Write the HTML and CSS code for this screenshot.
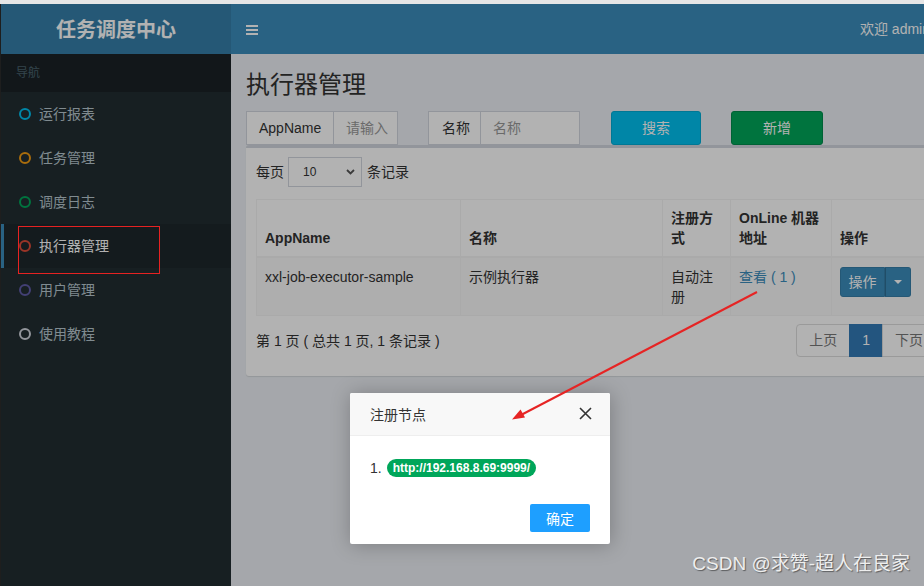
FILE: index.html
```html
<!DOCTYPE html>
<html lang="zh-CN">
<head>
<meta charset="utf-8">
<title>执行器管理</title>
<link rel="stylesheet" href="styles.css">
</head>
<body>
<div class="frame">
  <header class="main-header">
    <div class="logo">任务调度中心</div>
    <nav class="navbar">
      <span class="hamburger"><i></i><i></i><i></i></span>
      <span class="welcome">欢迎 admin</span>
    </nav>
  </header>
  <div class="layout">
    <aside class="sidebar">
      <div class="nav-header">导航</div>
      <ul class="menu">
        <li><a><span class="dot aqua"></span>运行报表</a></li>
        <li><a><span class="dot yellow"></span>任务管理</a></li>
        <li><a><span class="dot green"></span>调度日志</a></li>
        <li class="active"><a><span class="dot red"></span>执行器管理</a></li>
        <li><a><span class="dot purple"></span>用户管理</a></li>
        <li><a><span class="dot gray"></span>使用教程</a></li>
      </ul>
    </aside>
    <main class="content">
      <h1 class="page-title">执行器管理</h1>
      <div class="filters">
        <div class="group g1">
          <span class="addon">AppName</span>
          <span class="input">请输入</span>
        </div>
        <div class="group g2">
          <span class="addon">名称</span>
          <span class="input">名称</span>
        </div>
        <span class="btn btn-info">搜索</span>
        <span class="btn btn-success">新增</span>
      </div>
      <section class="box">
        <div class="length">
          <span>每页</span>
          <span class="select">10
            <svg class="chev" width="9" height="6" viewBox="0 0 9 6"><path d="M1 1l3.5 3.5L8 1" fill="none" stroke="#555" stroke-width="1.8"/></svg>
          </span>
          <span>条记录</span>
        </div>
        <table class="grid">
          <colgroup>
            <col class="c1"><col class="c2"><col class="c3"><col class="c4"><col class="c5">
          </colgroup>
          <thead>
            <tr><th>AppName</th><th>名称</th><th>注册方式</th><th>OnLine 机器地址</th><th>操作</th></tr>
          </thead>
          <tbody>
            <tr>
              <td>xxl-job-executor-sample</td>
              <td>示例执行器</td>
              <td>自动注册</td>
              <td><a class="link">查看 ( 1 )</a></td>
              <td><span class="btn-group"><span class="bg-main">操作</span><span class="bg-caret"><i></i></span></span></td>
            </tr>
          </tbody>
        </table>
        <div class="table-foot">
          <span class="info">第 1 页 ( 总共 1 页, 1 条记录 )</span>
          <ul class="pagination">
            <li><a>上页</a></li>
            <li class="active"><a>1</a></li>
            <li><a>下页</a></li>
          </ul>
        </div>
      </section>
    </main>
  </div>
</div>
<div class="backdrop"></div>
<div class="modal">
  <div class="modal-head">注册节点
    <svg class="close" width="13" height="13" viewBox="0 0 13 13"><path d="M1 1L12 12M12 1L1 12" stroke="#333" stroke-width="1.6" fill="none"/></svg>
  </div>
  <div class="modal-body">
    <div class="node"><span class="num">1.</span><span class="badge">http://192.168.8.69:9999/</span></div>
  </div>
  <div class="modal-foot"><span class="ok">确定</span></div>
</div>
<svg class="annot" width="924" height="586" viewBox="0 0 924 586">
  <rect x="18.5" y="226.5" width="141" height="47" fill="none" stroke="#e62222" stroke-width="1"/>
  <line x1="757" y1="292" x2="521" y2="415" stroke="#e62424" stroke-width="2"/>
  <polygon points="512,419.5 525,417.5 520.5,409.5" fill="#e62424"/>
</svg>
<div class="watermark">CSDN @求赞-超人在良家</div>
</body>
</html>
```

FILE: styles.css
```css
* { box-sizing: border-box; }
html, body { margin: 0; padding: 0; }
body {
  width: 924px;
  height: 586px;
  overflow: hidden;
  position: relative;
  background: #e6e6e6;
  font-family: "Liberation Sans", "Noto Sans CJK SC", sans-serif;
  font-size: 14px;
  line-height: 20px;
  color: #333;
}
ul { margin: 0; padding: 0; list-style: none; }

.frame {
  margin-top: 4px;
  width: 964px;
  height: 582px;
  border-left: 1px solid #2b2b2b;
  overflow: hidden;
}

/* header */
.main-header { display: flex; height: 50px; }
.logo {
  width: 230px;
  background: #367fa9;
  color: #fff;
  font-weight: bold;
  font-size: 20px;
  line-height: 50px;
  text-align: center;
  font-family: "Noto Sans CJK SC", sans-serif;
}
.navbar {
  flex: 1;
  background: #3c8dbc;
  display: flex;
  align-items: center;
  padding: 0 34px 0 15px;
}
.hamburger { display: flex; flex-direction: column; gap: 2px; width: 12px; margin-top: 1px; }
.hamburger i { display: block; height: 2px; background: #fff; }
.welcome { margin-left: auto; color: #fff; font-size: 14px; white-space: nowrap; }

/* layout */
.layout { display: flex; height: 532px; }
.sidebar { width: 230px; background: #222d32; }
.nav-header {
  height: 38px;
  line-height: 38px;
  padding: 0 15px;
  font-size: 12px;
  color: #4b646f;
  background: #1a2226;
}
.menu a {
  display: flex;
  align-items: center;
  height: 44px;
  padding-left: 15px;
  border-left: 3px solid transparent;
  color: #b8c7ce;
}
.menu .active a { background: #1e282c; border-left-color: #3c8dbc; color: #fff; }
.dot {
  width: 12px;
  height: 12px;
  border-radius: 50%;
  border: 2.5px solid #ccc;
  margin-right: 8px;
}
.dot.aqua { border-color: #00c0ef; }
.dot.yellow { border-color: #f39c12; }
.dot.green { border-color: #00a65a; }
.dot.red { border-color: #dd4b39; }
.dot.purple { border-color: #605ca8; }
.dot.gray { border-color: #d2d6de; }

/* content */
.content { flex: 1; background: #ecf0f5; padding: 15px; }
.page-title {
  margin: 0;
  font-size: 24px;
  line-height: 28px;
  font-weight: normal;
  color: #333;
  font-family: "Noto Sans CJK SC", sans-serif;
}
.filters { display: flex; margin-top: 14px; height: 34px; }
.group { display: flex; }
.addon, .input {
  height: 34px;
  line-height: 32px;
  border: 1px solid #d2d6de;
  background: #fff;
  padding: 0 0 0 12px;
  white-space: nowrap;
  overflow: hidden;
}
.input { border-left: 0; color: #999; }
.g1 .addon { width: 88px; }
.g1 .input { width: 64px; }
.g2 { margin-left: 30px; }
.g2 .addon { width: 53px; padding-left: 13px; }
.g2 .input { width: 99px; }
.btn {
  height: 34px;
  line-height: 32px;
  text-align: center;
  color: #fff;
  border-radius: 3px;
  border: 1px solid transparent;
}
.btn-info { margin-left: 31px; width: 90px; background: #00c0ef; border-color: #00acd6; }
.btn-success { margin-left: 30px; width: 92px; background: #00a65a; border-color: #008d4c; }

.box {
  width: 703px;
  background: #fff;
  border-top: 3px solid #d2d6de;
  border-radius: 3px;
  box-shadow: 0 1px 1px rgba(0,0,0,0.1);
  padding: 9px 10px 10px;
}
.length { display: flex; align-items: center; height: 30px; }
.select {
  position: relative;
  width: 74px;
  height: 30px;
  margin: 0 5px 0 4px;
  border: 1px solid #d2d6de;
  background: #fff;
  font-size: 12px;
  line-height: 28px;
  padding-left: 14px;
}
.chev { position: absolute; right: 6px; top: 11px; }

.grid {
  margin-top: 12px;
  width: 683px;
  border-collapse: collapse;
  table-layout: fixed;
  border: 1px solid #f4f4f4;
}
.c1 { width: 204px; }
.c2 { width: 202px; }
.c3 { width: 68px; }
.c4 { width: 101px; }
.c5 { width: 108px; }
.grid th, .grid td {
  border: 1px solid #f4f4f4;
  padding: 8px;
  text-align: left;
  vertical-align: top;
  line-height: 20px;
}
.grid td { padding-top: 9px; }
.grid th { vertical-align: bottom; border-bottom-width: 2px; font-weight: bold; }
.grid tbody tr { background: #f9f9f9; }
.link { color: #3c8dbc; }
.btn-group { display: inline-flex; height: 30px; }
.bg-main, .bg-caret {
  background: #3c8dbc;
  border: 1px solid #367fa9;
  color: #fff;
  line-height: 28px;
}
.bg-main { width: 45px; text-align: center; border-radius: 3px 0 0 3px; }
.bg-caret {
  width: 26px;
  border-left: 0;
  border-radius: 0 3px 3px 0;
  display: flex;
  align-items: center;
  justify-content: center;
  box-shadow: inset 1px 0 0 #2f6f94;
}
.bg-caret i {
  display: block;
  width: 0;
  height: 0;
  border-left: 4px solid transparent;
  border-right: 4px solid transparent;
  border-top: 4px solid #fff;
}

.table-foot {
  display: flex;
  align-items: center;
  justify-content: space-between;
  margin-top: 8px;
  margin-bottom: 9px;
}
.pagination { display: flex; margin-right: 3px; }
.pagination a {
  display: block;
  height: 33px;
  line-height: 31px;
  padding: 0 12px;
  border: 1px solid #ddd;
  margin-left: -1px;
  background: #fff;
  color: #777;
}
.pagination li:first-child a { border-radius: 4px 0 0 4px; margin-left: 0; }
.pagination li:last-child a { border-radius: 0 4px 4px 0; }
.pagination .active a { background: #337ab7; border-color: #337ab7; color: #fff; }

/* modal */
.backdrop {
  position: absolute;
  left: 0;
  top: 4px;
  right: 0;
  bottom: 0;
  background: rgba(0,0,0,0.3);
}
.modal {
  position: absolute;
  left: 350px;
  top: 393px;
  width: 260px;
  height: 151px;
  background: #fff;
  border-radius: 2px;
  box-shadow: 1px 1px 20px rgba(0,0,0,0.25);
  font-family: "Noto Sans CJK SC", sans-serif;
}
.modal-head {
  position: relative;
  height: 43px;
  line-height: 42px;
  padding: 0 20px;
  background: #f8f8f8;
  border-bottom: 1px solid #eee;
  border-radius: 2px 2px 0 0;
  font-size: 14px;
  color: #333;
}
.close { position: absolute; right: 18px; top: 14px; }
.modal-body { padding: 23px 20px 0; }
.node { display: flex; align-items: center; height: 18px; }
.num { font-family: "Liberation Sans", sans-serif; font-size: 14px; color: #333; margin-right: 5px; }
.badge {
  background: #00a65a;
  color: #fff;
  font-family: "Liberation Sans", sans-serif;
  font-weight: bold;
  font-size: 12px;
  line-height: 18px;
  padding: 0 6px;
  border-radius: 9px;
}
.modal-foot { padding: 27px 20px 0; display: flex; justify-content: flex-end; }
.ok {
  width: 60px;
  height: 28px;
  line-height: 28px;
  text-align: center;
  background: #1e9fff;
  color: #fff;
  border-radius: 2px;
  font-size: 14px;
}

.annot { position: absolute; left: 0; top: 0; }
.watermark {
  position: absolute;
  right: 14px;
  top: 552px;
  font-size: 19px;
  line-height: 24px;
  color: #eeeeee;
  text-shadow: 1px 1px 1px rgba(0,0,0,0.45);
  font-family: "Liberation Sans", "Noto Sans CJK SC", sans-serif;
}
```
